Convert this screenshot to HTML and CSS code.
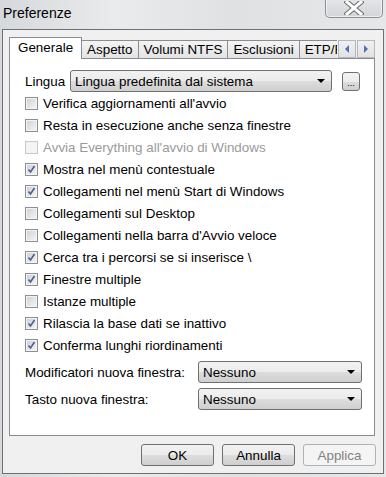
FILE: index.html
```html
<!DOCTYPE html>
<html lang="it">
<head>
    <meta charset="UTF-8">
    <title>Preferenze</title>
    <link rel="stylesheet" href="styles.css">
</head>
<body>
    <div class="window">
        <div class="titlebar">
            <span class="title">Preferenze</span>
            <button class="close-btn" aria-label="Chiudi">
                <svg width="20" height="14" viewBox="0 0 20 14">
                    <path d="M3 1 L17 13 M17 1 L3 13" stroke="#6a6a6a" stroke-width="5" stroke-linecap="square"/>
                    <path d="M3 1 L17 13 M17 1 L3 13" stroke="#ffffff" stroke-width="3" stroke-linecap="square"/>
                </svg>
            </button>
        </div>

        <div class="client">
            <div class="tabstrip">
                <div class="tabs">
                    <div class="tab active">Generale</div>
                    <div class="tab">Aspetto</div>
                    <div class="tab">Volumi NTFS</div>
                    <div class="tab">Esclusioni</div>
                    <div class="tab">ETP/FTP</div>
                </div>
                <div class="tab-scroll">
                    <span class="scroll-btn"><i class="arrow arrow-left"></i></span>
                    <span class="scroll-btn"><i class="arrow arrow-right"></i></span>
                </div>
            </div>

            <div class="panel">
                <div class="lang-row">
                    <span class="label">Lingua</span>
                    <div class="combo combo-lang">
                        <span>Lingua predefinita dal sistema</span>
                        <i class="caret"></i>
                    </div>
                    <button class="browse-btn">...</button>
                </div>

                <ul class="options">
                    <li class="option"><span class="check"></span>Verifica aggiornamenti all'avvio</li>
                    <li class="option"><span class="check"></span>Resta in esecuzione anche senza finestre</li>
                    <li class="option disabled"><span class="check"></span>Avvia Everything all'avvio di Windows</li>
                    <li class="option"><span class="check checked"></span>Mostra nel menù contestuale</li>
                    <li class="option"><span class="check checked"></span>Collegamenti nel menù Start di Windows</li>
                    <li class="option"><span class="check"></span>Collegamenti sul Desktop</li>
                    <li class="option"><span class="check"></span>Collegamenti nella barra d'Avvio veloce</li>
                    <li class="option"><span class="check checked"></span>Cerca tra i percorsi se si inserisce \</li>
                    <li class="option"><span class="check checked"></span>Finestre multiple</li>
                    <li class="option"><span class="check"></span>Istanze multiple</li>
                    <li class="option"><span class="check checked"></span>Rilascia la base dati se inattivo</li>
                    <li class="option"><span class="check checked"></span>Conferma lunghi riordinamenti</li>
                </ul>

                <div class="field-row">
                    <span class="label">Modificatori nuova finestra:</span>
                    <div class="combo combo-small"><span>Nessuno</span><i class="caret"></i></div>
                </div>
                <div class="field-row">
                    <span class="label">Tasto nuova finestra:</span>
                    <div class="combo combo-small"><span>Nessuno</span><i class="caret"></i></div>
                </div>
            </div>

            <div class="buttons">
                <button class="btn">OK</button>
                <button class="btn">Annulla</button>
                <button class="btn" disabled>Applica</button>
            </div>
        </div>
    </div>

    <script>
        // Tick boxes toggle like the real dialog
        document.querySelectorAll('.option:not(.disabled)').forEach(function(row) {
            row.addEventListener('click', function() {
                row.querySelector('.check').classList.toggle('checked');
            });
        });
    </script>
</body>
</html>
```

FILE: styles.css
```css
* {
    margin: 0;
    padding: 0;
    box-sizing: border-box;
}

body {
    width: 386px;
    height: 477px;
    overflow: hidden;
    font-family: 'Liberation Sans', Arial, sans-serif;
    font-size: 13.4px;
    color: #000;
    background: linear-gradient(90deg, #d6d9dc 0%, #e9ebec 30%, #dfe1e3 60%, #e6e7e8 100%);
}

.window {
    display: flex;
    flex-direction: column;
    height: 100%;
    padding: 0 2px 3px 2px;
}

/* Title bar */
.titlebar {
    height: 29px;
    display: flex;
    align-items: flex-start;
    justify-content: space-between;
}

.title {
    font-size: 14px;
    margin: 5px 0 0 1px;
    color: #000;
}

.close-btn {
    width: 58px;
    height: 19px;
    margin-top: -1px;
    margin-right: 1px;
    border: 1px solid #8a8d92;
    border-top: none;
    border-radius: 0 0 5px 5px;
    background: linear-gradient(#e4e6e8, #d2d5d9);
    box-shadow: inset 0 0 0 1px rgba(255, 255, 255, 0.6);
    display: flex;
    align-items: center;
    justify-content: center;
}

/* Client area */
.client {
    flex: 1;
    display: flex;
    flex-direction: column;
    background: #f0f0f0;
    border: 1px solid #707070;
    padding: 7px 8px 6px 6px;
}

.tabstrip {
    display: flex;
    align-items: flex-end;
    height: 22px;
    position: relative;
    z-index: 1;
}

.tabs {
    flex: 1;
    display: flex;
    align-items: flex-end;
    overflow: hidden;
    height: 22px;
}

.tab {
    flex: none;
    height: 18px;
    margin-bottom: 1px;
    padding: 1px 5px 0;
    border: 1px solid #898c95;
    border-bottom: none;
    border-left: none;
    background: linear-gradient(#f4f4f4, #e3e3e3);
    white-space: nowrap;
    line-height: 15px;
}

.tab.active {
    height: 22px;
    margin-bottom: 0;
    padding: 1px 8px 0;
    border-left: 1px solid #898c95;
    background: #fff;
    line-height: 18px;
}

.tab-scroll {
    display: flex;
    height: 18px;
    margin-bottom: 1px;
}

.scroll-btn {
    width: 18px;
    height: 18px;
    margin-left: 1px;
    border: 1px solid #b5b8bd;
    background: linear-gradient(#f0f0f0, #e2e2e2);
    display: flex;
    align-items: center;
    justify-content: center;
}

.arrow {
    width: 0;
    height: 0;
    border-top: 4px solid transparent;
    border-bottom: 4px solid transparent;
}

.arrow-left {
    border-right: 4px solid #4f6fb8;
}

.arrow-right {
    border-left: 4px solid #4f6fb8;
}

/* Tab panel */
.panel {
    height: 378px;
    margin-top: -1px;
    background: #fff;
    border: 1px solid #898c95;
    padding: 11px 0 0 15px;
}

.lang-row {
    display: flex;
    align-items: center;
    height: 22px;
}

.lang-row .label {
    width: 45px;
}

.combo {
    height: 22px;
    display: flex;
    align-items: center;
    justify-content: space-between;
    padding: 0 6px 0 4px;
    border: 1px solid #707070;
    border-radius: 3px;
    background: linear-gradient(#f2f2f2 0%, #ebebeb 50%, #dddddd 51%, #cfcfcf 100%);
    white-space: nowrap;
}

.combo-lang {
    width: 262px;
}

.combo-small {
    width: 164px;
}

.caret {
    width: 0;
    height: 0;
    border-left: 4px solid transparent;
    border-right: 4px solid transparent;
    border-top: 4px solid #000;
}

.browse-btn {
    width: 18px;
    height: 19px;
    margin-left: 10px;
    border: 1px solid #707070;
    border-radius: 3px;
    background: linear-gradient(#f2f2f2 0%, #ebebeb 50%, #dddddd 51%, #cfcfcf 100%);
    font-family: 'Liberation Sans', Arial, sans-serif;
    font-size: 9px;
    line-height: 20px;
    color: #000;
}

.options {
    list-style: none;
}

.option {
    height: 22px;
    display: flex;
    align-items: center;
    white-space: nowrap;
}

.option.disabled {
    color: #9a9a9a;
}

.check {
    width: 13px;
    height: 13px;
    margin-right: 5px;
    border: 1px solid #8e8f8f;
    box-shadow: inset 0 0 0 1px #f4f4f4;
    background: linear-gradient(135deg, #cbcfd5, #f7f7f7);
}

.option.disabled .check {
    border-color: #c9c9c9;
    background: #f4f4f4;
}

.check.checked {
    background:
        url("data:image/svg+xml,%3Csvg xmlns='http://www.w3.org/2000/svg' width='11' height='11'%3E%3Cpath d='M2.5 5.5 L4.5 8 L8.5 2' fill='none' stroke='%234a5f8f' stroke-width='1.6'/%3E%3C/svg%3E") center no-repeat,
        linear-gradient(135deg, #cbcfd5, #f7f7f7);
}

.field-row {
    display: flex;
    align-items: center;
    height: 22px;
    margin-top: 5px;
}

.field-row .label {
    width: 173px;
}

/* Dialog buttons */
.buttons {
    display: flex;
    justify-content: flex-end;
    gap: 8px;
    margin-top: 8px;
    margin-right: -1px;
}

.btn {
    width: 73px;
    height: 22px;
    border: 1px solid #707070;
    border-radius: 3px;
    background: linear-gradient(#f2f2f2 0%, #ebebeb 50%, #dddddd 51%, #cfcfcf 100%);
    font-family: 'Liberation Sans', Arial, sans-serif;
    font-size: 13.4px;
    color: #000;
}

.btn:disabled {
    border-color: #adb2b5;
    background: #f4f4f4;
    color: #838383;
}
```
